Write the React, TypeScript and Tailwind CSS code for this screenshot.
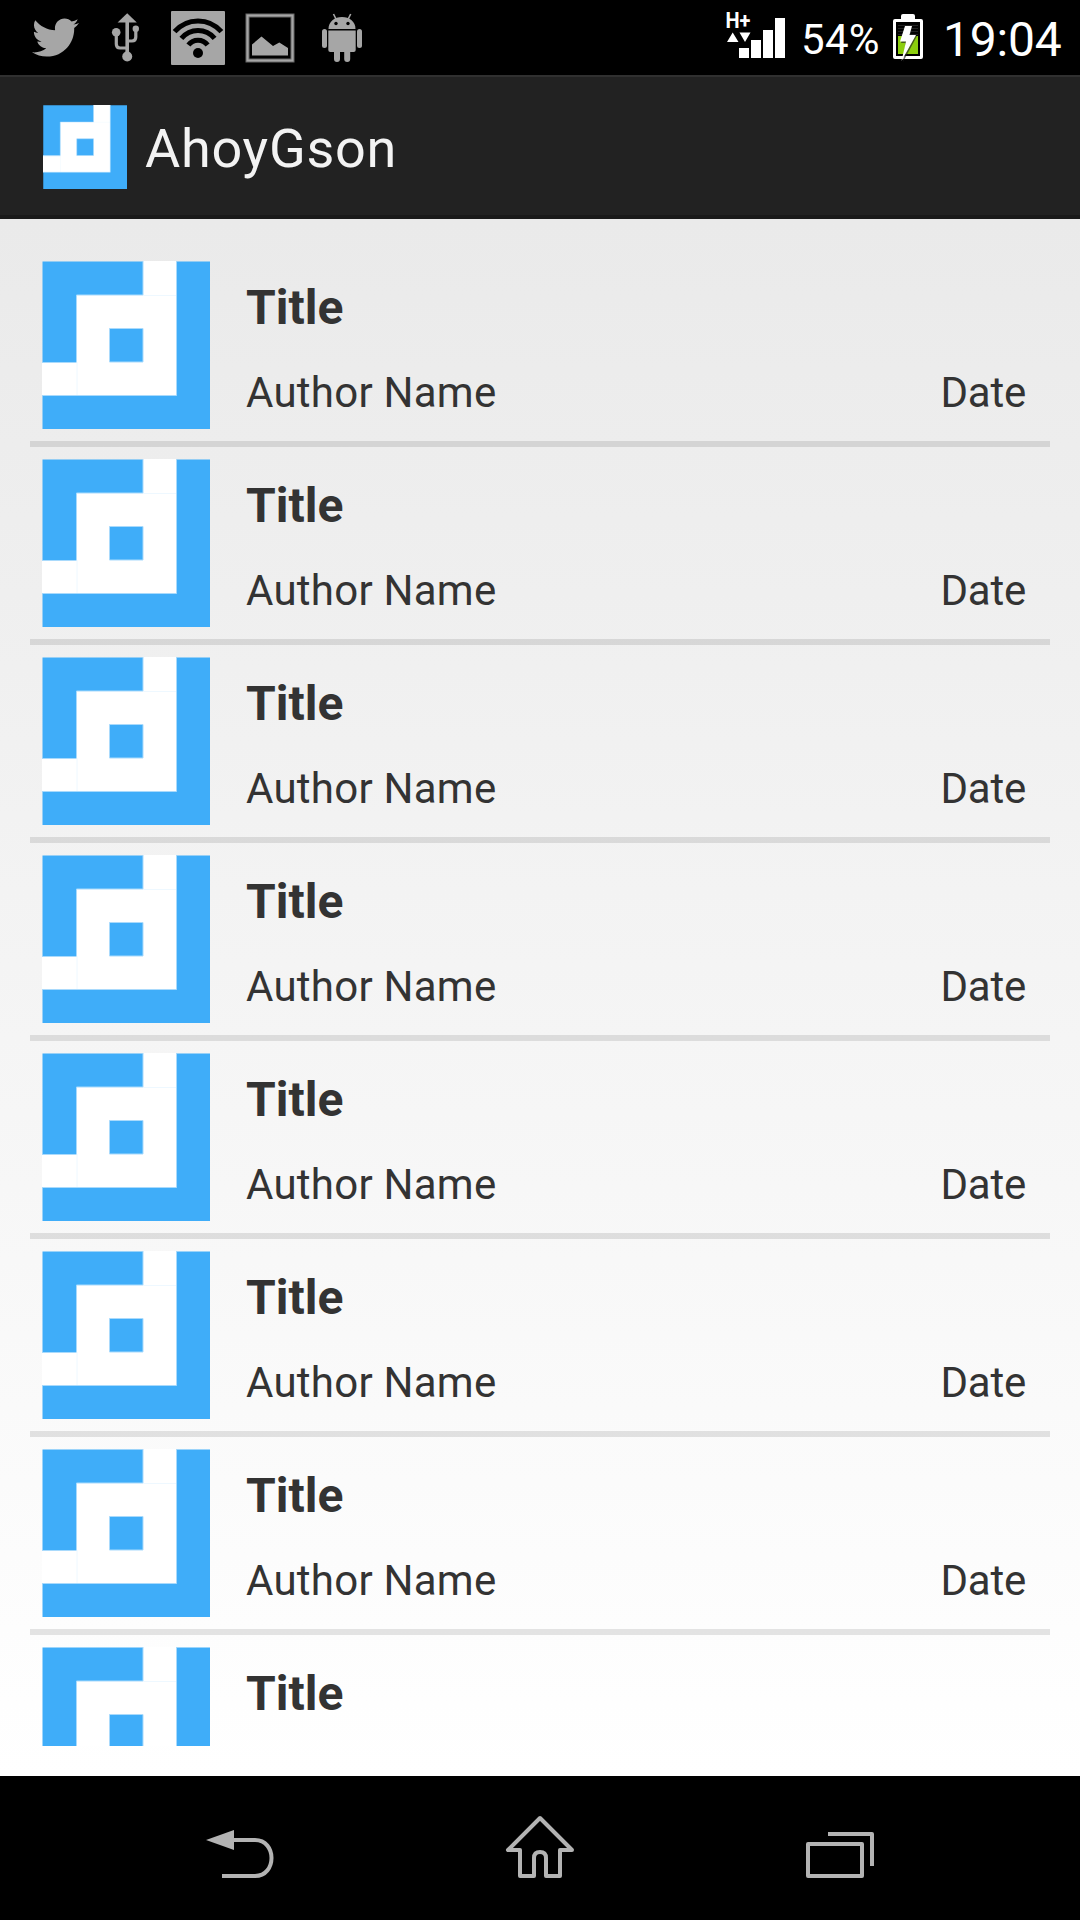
import React from "react";
import { FaTwitter } from "react-icons/fa";

function AppLogo({ className }: { className: string }) {
  return (
    <svg viewBox="0 0 168 168" className={className}>
      <path d="M0.500 0.500H101V0H134.500V0.500H168V168H0.500V134.500H0V101H0.500Z" fill="#3fadf9" />
      <path d="M101 0H134.5V134.5H0V101H34.5V34H101Z" fill="#fff" />
      <rect x="67.5" y="67.5" width="33.5" height="33.5" fill="#3fadf9" />
      <path d="M101 34.5H134M35 101V134" stroke="#eef8ff" strokeWidth="1" />
      <path d="M101 0V34M134.5 0V134.5H0M34.5 101V34H101M0 101.5H34.5M67.5 67.5h33.5v33.5h-33.5z" stroke="#a9dafc" strokeWidth="1" fill="none" />
    </svg>
  );
}

function UsbIcon() {
  return (
    <svg viewBox="0 0 72 75" className="h-[75px] w-[72px]" fill="none" stroke="#a6a6a6">
      <path d="M37.2 20V52" strokeWidth="3.6" />
      <path d="M26.3 33V44Q26.3 48 30 48H37M45.8 30V37Q45.8 41 42 41H38" strokeWidth="3.2" />
      <path d="M37.2 13.3L46.8 22.5H27.6Z" fill="#a6a6a6" stroke="none" />
      <circle cx="26.2" cy="32.3" r="4.3" fill="#a6a6a6" stroke="none" />
      <circle cx="45.8" cy="28.8" r="3.2" fill="#a6a6a6" stroke="none" />
      <circle cx="37.2" cy="56.5" r="5" fill="#a6a6a6" stroke="none" />
    </svg>
  );
}

function WifiIcon() {
  return (
    <svg viewBox="0 0 72 75" className="h-[75px] w-[72px]">
      <rect x="9" y="11" width="54" height="54" rx="1" fill="#a6a6a6" />
      <g fill="none" stroke="#000" strokeWidth="5">
        <path d="M12.6 31.7Q22 21 36 21T59.4 31.7" />
        <path d="M19.4 38.3Q26 30.4 36 30.4T52.6 38.3" />
        <path d="M26.4 45Q30 40.2 36 40.2T45.6 45" />
      </g>
      <circle cx="36" cy="53" r="5" fill="#000" />
    </svg>
  );
}

function PictureIcon() {
  return (
    <svg viewBox="0 0 72 75" className="h-[75px] w-[72px]">
      <rect x="13.5" y="15.5" width="45" height="45" fill="none" stroke="#686868" strokeWidth="4" />
      <rect x="13.5" y="15.5" width="45" height="45" fill="none" stroke="#a6a6a6" strokeWidth="2" />
      <path d="M18 44.5L27.5 36.5L39 46L45.3 42.5L54 48V55.5H18Z" fill="#a6a6a6" />
    </svg>
  );
}

function AndroidIcon() {
  return (
    <svg viewBox="0 0 72 75" className="h-[75px] w-[72px]" fill="#a6a6a6">
      <path d="M22.5 29C22.5 21.5 28.5 17 36 17S49.5 21.5 49.5 29Z" />
      <path d="M27.5 14L30 19M44.7 14L42.2 19" stroke="#a6a6a6" strokeWidth="1.6" />
      <circle cx="30" cy="23.5" r="1.7" fill="#000" />
      <circle cx="42" cy="23.5" r="1.7" fill="#000" />
      <path d="M22.3 30.5H49.7V50Q49.7 52 47.7 52H24.3Q22.3 52 22.3 50Z" />
      <rect x="16" y="29" width="5" height="19" rx="2.5" />
      <rect x="51" y="29" width="5" height="19" rx="2.5" />
      <path d="M28 50H34V59A3 3 0 0 1 28 59ZM38.2 50H44.2V59A3 3 0 0 1 38.2 59Z" />
    </svg>
  );
}

function SignalIcon() {
  return (
    <svg viewBox="0 0 60 75" className="h-[75px] w-[60px]" fill="#fff">
      <path d="M2 42L7.700 32.500L13.500 42ZM14.500 32.500H25.500L20 42Z" />
      <path d="M14 48H24V58H14ZM26 40H36V58H26ZM38 30H48V58H38ZM50 18H60V58H50Z" />
      <text x="0.500" y="28" fontSize="22" fontWeight="700" textLength="25" lengthAdjust="spacingAndGlyphs">H+</text>
    </svg>
  );
}

function BatteryIcon() {
  return (
    <svg viewBox="0 0 30 75" className="h-[75px] w-[30px]">
      <path d="M8 19V16Q8 14 10 14H20Q22 14 22 16V19H28Q30 19 30 21V57Q30 59 28 59H2Q0 59 0 57V21Q0 19 2 19Z" fill="#fff" />
      <rect x="3" y="22" width="24" height="34" fill="#000" />
      <path d="M5 25.500H25M5 28.500H25M5 31.500H25M5 34.500H25" stroke="#222" />
      <rect x="5" y="36" width="20" height="18" fill="#8cce0e" />
      <path d="M13 27H19L17.500 36H24L10 62L12.500 43H8Z" fill="#222" opacity=".65" />
      <path d="M12 26H19L16.500 35H23L8.500 61L13 41.500H7Z" fill="#fff" />
    </svg>
  );
}

function StatusBar() {
  return (
    <header className="flex h-[75px] items-center justify-between bg-black pl-[18px] pr-[18px] text-white">
      <div className="flex items-center">
        <div className="flex w-[72px] justify-center pl-[2px]">
          <FaTwitter size={47} color="#a6a6a6" />
        </div>
        <UsbIcon />
        <WifiIcon />
        <PictureIcon />
        <AndroidIcon />
      </div>
      <div className="flex items-center">
        <SignalIcon />
        <span className="ml-[16px] w-[80px] whitespace-nowrap pt-[3px] text-[42px] leading-[49px] tracking-[0.3px]">54%</span>
        <span className="ml-[12px]"><BatteryIcon /></span>
        <span className="ml-[20px] w-[119px] whitespace-nowrap pt-[5px] text-[48px] leading-[56px] tracking-[-0.2px]">19:04</span>
      </div>
    </header>
  );
}

function Row({ titleOnly = false }: { titleOnly?: boolean }) {
  return (
    <li className="flex h-[198px] shrink-0 border-b-6 border-black/10 pl-3 pt-3">
      <AppLogo className="size-[168px] shrink-0" />
      <div className="flex grow flex-col pl-9 pr-6 pt-[19px] text-[#333333]">
        <h2 className="text-[48px] font-bold leading-[56px]">Title</h2>
        {!titleOnly && (
          <div className="mt-8 flex justify-between text-[42px] leading-[49px]">
            <span className="tracking-[0.25px]">Author Name</span>
            <span className="tracking-[-0.2px]">Date</span>
          </div>
        )}
      </div>
    </li>
  );
}

export default function App() {
  return (
    <div className="flex h-[1920px] w-[1080px] flex-col overflow-hidden bg-black font-[Roboto,sans-serif]">
      <StatusBar />
      <div className="flex h-[144px] items-center border-b-4 border-t-2 border-b-[#1a1a1a] border-t-[#303030] bg-[#222222] pl-[43px]">
        <AppLogo className="mt-[2px] size-[84px]" />
        <h1 className="ml-[18px] pt-[6px] text-[54px] leading-[64px] tracking-[0.75px] text-[#f3f3f3]">AhoyGson</h1>
      </div>
      <main className="h-[1557px] bg-linear-to-b from-[#eaeaea] to-white p-[30px]">
        <ul className="flex h-full flex-col overflow-hidden">
          {Array.from({ length: 8 }, (_, i) => (
            <Row key={i} titleOnly={i === 7} />
          ))}
        </ul>
      </main>
      <nav className="flex h-[144px] justify-center bg-black">
        <button aria-label="Back" className="flex w-[300px] justify-center">
          <svg viewBox="0 0 120 144" className="h-[144px] w-[120px]" fill="none" stroke="#b3b3b3" strokeWidth="4">
            <path d="M52 64H75C97 64 97 100 75 100H42" />
            <path d="M26 64L54 54V74Z" fill="#b3b3b3" stroke="none" />
          </svg>
        </button>
        <button aria-label="Home" className="flex w-[300px] justify-center">
          <svg viewBox="0 0 120 144" className="h-[144px] w-[120px]" fill="none" stroke="#b3b3b3" strokeWidth="4">
            <path d="M60 38L92 70" stroke="none" />
            <path d="M60 42L28 74H40V100H54V82Q54 76 60 76T66 82V100H80V74H92Z" strokeLinejoin="round" />
          </svg>
        </button>
        <button aria-label="Recent apps" className="flex w-[300px] justify-center">
          <svg viewBox="0 0 120 144" className="h-[144px] w-[120px]" fill="none" stroke="#b3b3b3" strokeWidth="4" strokeLinejoin="round">
            <path d="M28 68H82V100H28ZM48 58H92V90" />
          </svg>
        </button>
      </nav>
    </div>
  );
}
